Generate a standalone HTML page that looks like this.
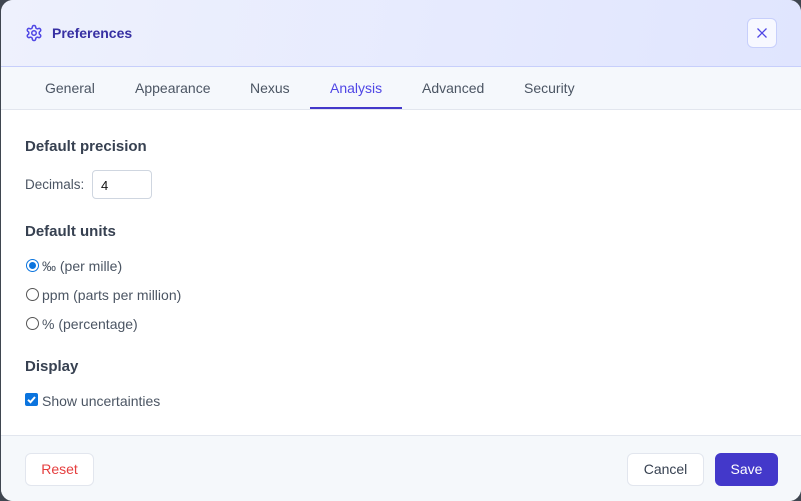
<!DOCTYPE html>
<html><head><meta charset="utf-8"><style>
*{box-sizing:border-box;margin:0;padding:0}
html,body{width:801px;height:501px;overflow:hidden;background:#3f4650;font-family:"Liberation Sans",sans-serif}
.dlg{position:absolute;left:1px;top:0;width:800px;height:501px;background:#fff;border-radius:12px;overflow:hidden}
.hdr{height:67px;background:linear-gradient(100deg,#eef1fd,#e0e5fe);border-bottom:1px solid #c7cffb;position:relative}
.hdr .t{position:absolute;left:51px;top:25px;font-size:14px;font-weight:bold;color:#3730a3}
.hdr svg.g{position:absolute;left:24px;top:24px}
.x{position:absolute;left:746px;top:18px;width:30px;height:30px;border:1px solid #c7cffb;border-radius:6px;background:#f7f8ff}
.tabs{height:43px;background:#f5f8fc;border-bottom:1px solid #e2e6ee;position:relative}
.tab{position:absolute;top:13px;font-size:14px;color:#4b5563}
.tab.a{color:#4f46e5}
.ul{position:absolute;left:309px;top:40px;width:92px;height:2px;background:#4338ca}
h3{position:absolute;left:24px;font-size:15px;font-weight:bold;color:#374151}
.lab{position:absolute;font-size:14px;color:#4b5563}
.inp{position:absolute;left:91px;top:170px;width:60px;height:29px;border:1px solid #cfd6e0;border-radius:4px;font-size:13px;color:#111;padding:7px 8px}
.r{position:absolute;left:25px;width:13px;height:13px;border:1px solid #555;border-radius:50%;background:#fff}
.r.on{border:1.5px solid #0b74de}
.r.on::after{content:"";position:absolute;left:1.5px;top:1.5px;width:7px;height:7px;border-radius:50%;background:#0b74de}
.ftr{position:absolute;left:0;top:435px;width:800px;height:66px;background:#f5f8fb;border-top:1px solid #e2e6ee}
.btn{position:absolute;top:17px;height:33px;border:1px solid #e2e6ee;border-radius:6px;background:#fff;font-size:14px;text-align:center;line-height:31px}
</style></head><body>
<div class="dlg">
<div class="hdr">
<svg class="g" width="18" height="18" viewBox="0 0 24 24" fill="none" stroke="#4f46e5" stroke-width="2" stroke-linecap="round" stroke-linejoin="round"><path d="M12.22 2h-.44a2 2 0 0 0-2 2v.18a2 2 0 0 1-1 1.73l-.43.25a2 2 0 0 1-2 0l-.15-.08a2 2 0 0 0-2.730.73l-.22.38a2 2 0 0 0 .73 2.73l.15.1a2 2 0 0 1 1 1.72v.51a2 2 0 0 1-1 1.740l-.15.09a2 2 0 0 0-.73 2.73l.22.38a2 2 0 0 0 2.73.73l.15-.08a2 2 0 0 1 2 0l.43.25a2 2 0 0 1 1 1.73V20a2 2 0 0 0 2 2h.44a2 2 0 0 0 2-2v-.18a2 2 0 0 1 1-1.73l.43-.25a2 2 0 0 1 2 0l.15.08a2 2 0 0 0 2.73-.73l.22-.39a2 2 0 0 0-.73-2.73l-.15-.08a2 2 0 0 1-1-1.74v-.5a2 2 0 0 1 1-1.74l.15-.09a2 2 0 0 0 .73-2.73l-.22-.38a2 2 0 0 0-2.73-.73l-.15.08a2 2 0 0 1-2 0l-.43-.25a2 2 0 0 1-1-1.73V4a2 2 0 0 0-2-2z"/><circle cx="12" cy="12" r="3"/></svg>
<div class="t">Preferences</div>
<div class="x"><svg width="28" height="28" viewBox="0 0 28 28"><path d="M9.5 9.5l9 9M18.5 9.5l-9 9" stroke="#4f46e5" stroke-width="1.3"/></svg></div>
</div>
<div class="tabs">
<div class="tab" style="left:44px">General</div>
<div class="tab" style="left:134px">Appearance</div>
<div class="tab" style="left:249px">Nexus</div>
<div class="tab a" style="left:329px">Analysis</div>
<div class="tab" style="left:421px">Advanced</div>
<div class="tab" style="left:523px">Security</div>
<div class="ul"></div>
</div>
<h3 style="top:138px">Default precision</h3>
<div class="lab" style="left:24px;top:177px;font-size:13.5px">Decimals:</div>
<div class="inp">4</div>
<h3 style="top:223px">Default units</h3>
<div class="r on" style="top:259px"></div><div class="lab" style="left:41px;top:258px">‰ (per mille)</div>
<div class="r" style="top:288px"></div><div class="lab" style="left:41px;top:287px">ppm (parts per million)</div>
<div class="r" style="top:317px"></div><div class="lab" style="left:41px;top:316px">% (percentage)</div>
<h3 style="top:358px">Display</h3>
<svg style="position:absolute;left:24px;top:393px" width="13" height="13" viewBox="0 0 13 13"><rect width="13" height="13" rx="2" fill="#0b74de"/><path d="M3 6.8l2.5 2.4L10 4" stroke="#fff" stroke-width="2" fill="none"/></svg>
<div class="lab" style="left:41px;top:393px">Show uncertainties</div>
<div class="ftr">
<div class="btn" style="left:24px;width:69px;color:#e53e3e">Reset</div>
<div class="btn" style="left:626px;width:77px;color:#374151">Cancel</div>
<div class="btn" style="left:714px;width:63px;background:#4338ca;border-color:#4338ca;color:#fff">Save</div>
</div>
</div>
</body></html>
